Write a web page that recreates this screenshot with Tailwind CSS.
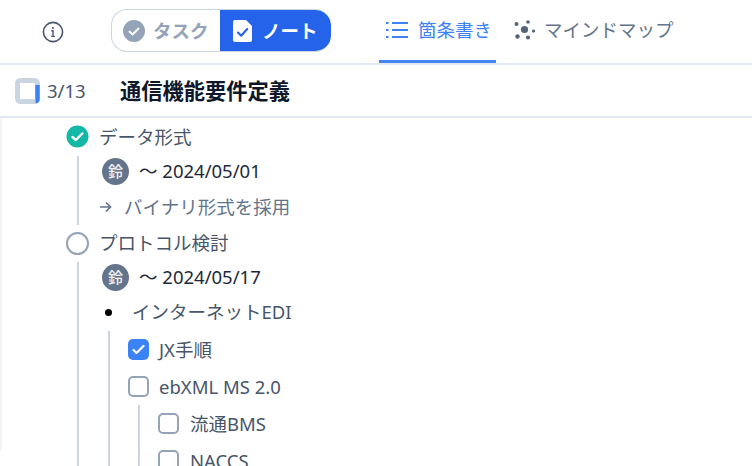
<!DOCTYPE html>
<html lang="ja"><head><meta charset="utf-8">
<script src="https://cdn.jsdelivr.net/npm/@tailwindcss/browser@4"></script>
</head>
<body class="bg-white overflow-hidden">
<div class="w-[752px] h-[466px] overflow-hidden font-['Noto_Sans','Noto_Sans_CJK_JP',sans-serif] text-[#475569] text-[18.5px]">
  <header class="h-[65px] border-b-2 border-[#e2e8f0] flex items-center relative">
    <div class="w-[111px] pl-[42px] flex items-center">
      <svg width="22" height="22" viewBox="0 0 22 22" fill="none" stroke="#475569" stroke-width="1.6"><circle cx="11" cy="11" r="9.6"/><path d="M9.3 9.8H11v5.4M9.2 15.4h3.6" stroke-width="1.4"/><circle cx="10.9" cy="6.9" r="1" fill="#475569" stroke="none"/></svg>
    </div>
    <div class="flex h-[43px] w-[220px] mb-[2px] rounded-[16px] overflow-hidden border border-[#cbd5e1] border-r-0">
      <div class="w-[108px] flex items-center pl-[11px] gap-[8px] text-[#94a3b8] font-bold">
        <svg width="22" height="22" viewBox="0 0 22 22"><circle cx="11" cy="11" r="11" fill="#94a3b8"/><path d="M6.5 11.5l3 3 6-6" fill="none" stroke="#fff" stroke-width="2" stroke-linecap="round" stroke-linejoin="round"/></svg>
        <span>タスク</span>
      </div>
      <div class="flex-1 bg-[#2563eb] -my-px flex items-center pl-[13px] gap-[9px] text-white font-bold rounded-r-[16px]">
        <svg width="20" height="22" viewBox="0 0 20 22"><path d="M2 0h11l6 6v14a2 2 0 0 1-2 2H2a2 2 0 0 1-2-2V2a2 2 0 0 1 2-2z" fill="#fff"/><path d="M5 12.5l3.2 3.2 6-6.7" fill="none" stroke="#2563eb" stroke-width="2.1" stroke-linecap="round" stroke-linejoin="round"/></svg>
        <span>ノート</span>
      </div>
    </div>
    <nav class="flex h-full ml-[48px]">
      <div class="relative w-[117px] flex items-center pl-[7px] gap-[10px] text-[#3b82f6] pb-[4px]">
        <svg width="22" height="18" viewBox="0 0 22 18" stroke="#3b82f6" stroke-width="2" fill="none"><path d="M6 2h16M6 9h16M6 16h16"/><path d="M0 2h2.5M0 9h2.5M0 16h2.5"/></svg>
        <span>箇条書き</span>
        <div class="absolute left-0 right-0 bottom-0 h-[3px] bg-[#4285f4]"></div>
      </div>
      <div class="flex items-center pl-[18px] gap-[9px] text-[#64748b] pb-[4px]">
        <svg width="21" height="20" viewBox="0 0 21 20" fill="#56647a"><circle cx="10.5" cy="9.5" r="3.6"/><circle cx="2.5" cy="4" r="2"/><circle cx="14" cy="2" r="1.8"/><circle cx="19.5" cy="11" r="1.6"/><circle cx="14" cy="17.5" r="2.1"/><circle cx="3.5" cy="16.5" r="2.2"/></svg>
        <span>マインドマップ</span>
      </div>
    </nav>
  </header>
  <div class="h-[53px] border-b-2 border-[#e2e8f0] flex items-center pl-[15px]">
    <svg width="25" height="26" viewBox="0 0 25 26" fill="none"><rect x="2.5" y="2.5" width="20" height="21" rx="3" stroke="#cbd5e1" stroke-width="5"/><path d="M22.5 7v14q0 2-2 2" stroke="#3b82f6" stroke-width="4.4"/></svg>
    <span class="ml-[7px] w-[73px]">3/13</span>
    <span class="text-[21.25px] font-bold text-[#0f172a]">通信機能要件定義</span>
  </div>
  <main class="border-l-2 border-[#f1f5f9] h-[333px] pl-[64px]">
    <div class="h-[37px] flex items-center gap-[10px]">
      <svg width="23" height="23" viewBox="0 0 23 23"><circle cx="11.5" cy="11.5" r="11" fill="#14b8a6"/><path d="M6.5 12l3.3 3 6.5-6.5" fill="none" stroke="#fff" stroke-width="2.4" stroke-linecap="round" stroke-linejoin="round"/></svg>
      <span>データ形式</span>
    </div>
    <div class="ml-[11px] mt-px border-l-2 border-[#cbd5e1] h-[69px] pl-[23px] flex flex-col">
      <div class="h-[30px] flex items-center gap-[10px] shrink-0">
        <span class="w-[27px] h-[27px] rounded-full bg-[#64748b] text-white/90 text-[15px] font-medium flex items-center justify-center leading-none">鈴</span>
        <span class="text-[#1e293b]">〜 2024/05/01</span>
      </div>
      <div class="h-[39px] pt-[2px] flex items-center gap-[12px] text-[#64748b]">
        <svg width="13" height="12" viewBox="0 0 13 12" fill="none" stroke="#64748b" stroke-width="1.7" class="-ml-[3px]"><path d="M1 6h10.5M7 1.5L11.5 6 7 10.5"/></svg>
        <span>バイナリ形式を採用</span>
      </div>
    </div>
    <div class="h-[36px] flex items-center gap-[10px]">
      <span class="w-[23px] h-[23px] rounded-full border-2 border-[#94a3b8]"></span>
      <span>プロトコル検討</span>
    </div>
    <div class="ml-[11px] mt-px border-l-2 border-[#cbd5e1] pl-[23px] h-[300px]">
      <div class="h-[30px] flex items-center gap-[10px]">
        <span class="w-[27px] h-[27px] rounded-full bg-[#64748b] text-white/90 text-[15px] font-medium flex items-center justify-center leading-none">鈴</span>
        <span class="text-[#1e293b]">〜 2024/05/17</span>
      </div>
      <div class="h-[39px] pt-px flex items-center gap-[20px]">
        <span class="w-[7px] h-[7px] rounded-full bg-black ml-[3px]"></span>
        <span>インターネットEDI</span>
      </div>
      <div class="ml-[6px] border-l-2 border-[#cbd5e1] pl-[18px] h-[200px]">
        <div class="h-[37px] flex items-center gap-[10px]">
          <span class="w-[21px] h-[21px] rounded-[5px] bg-[#3b82f6] flex items-center justify-center"><svg width="13" height="11" viewBox="0 0 13 11" fill="none" stroke="#fff" stroke-width="2.2" stroke-linecap="round" stroke-linejoin="round"><path d="M1.5 6l3 3 7-7"/></svg></span>
          <span>JX手順</span>
        </div>
        <div class="h-[37px] flex items-center gap-[10px]">
          <span class="w-[21px] h-[21px] rounded-[5px] border-2 border-[#94a3b8]"></span>
          <span>ebXML MS 2.0</span>
        </div>
        <div class="ml-[10px] border-l-2 border-[#cbd5e1] pl-[18px] h-[120px]">
          <div class="h-[37px] flex items-center gap-[11px]">
            <span class="w-[21px] h-[21px] rounded-[5px] border-2 border-[#94a3b8]"></span>
            <span>流通BMS</span>
          </div>
          <div class="h-[37px] flex items-center gap-[11px]">
            <span class="w-[21px] h-[21px] rounded-[5px] border-2 border-[#94a3b8]"></span>
            <span>NACCS</span>
          </div>
        </div>
      </div>
    </div>
  </main>
</div>
</body></html>
